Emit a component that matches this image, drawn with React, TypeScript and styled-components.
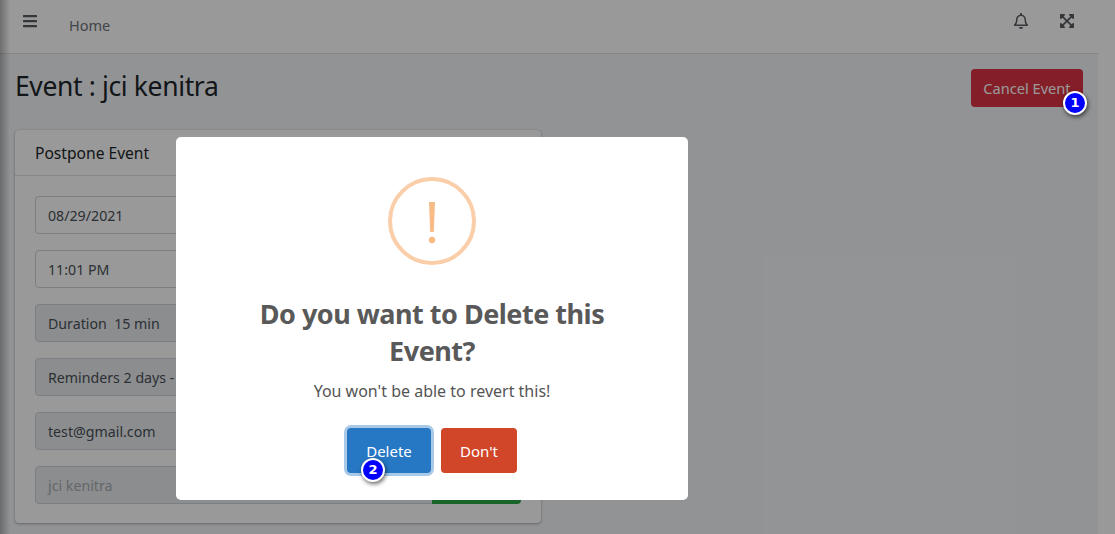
import React from 'react';
import styled, { createGlobalStyle } from 'styled-components';
import { FaBars, FaExpandArrowsAlt, FaRegBell } from 'react-icons/fa';

const Global = createGlobalStyle`
  html, body { margin: 0; padding: 0; height: 100%; overflow: hidden; }
  body { font-family: "Noto Sans", "Open Sans", sans-serif; background: #f4f6f9; color: #212529; }
  * { box-sizing: border-box; }
`;
const Page = styled.div`
  position: relative; width: 1115px; height: 534px; overflow: hidden; display: flex;
`;
const Content = styled.div`
  position: relative; width: 1098px; height: 534px; background: #f4f6f9;
  &::after {
    content: ''; position: absolute; left: 0; top: 0; bottom: 0; width: 10px;
    background: linear-gradient(to right, rgba(0,0,0,.28), rgba(0,0,0,0));
  }
`;
const Rail = styled.div`
  flex: 1; background: #fff;
`;
const Nav = styled.header`
  height: 54px; background: #fff; border-bottom: 1px solid #dee2e6; display: flex; align-items: flex-start; padding: 13px 23px 0 22px;
`;
const IconBtn = styled.span`
  display: block; color: #575c61; line-height: 0;
`;
const HomeLink = styled.span`
  font-size: 14.500px; line-height: 20px; color: #6e7378; margin: 2px auto 0 31px;
`;
const NavRight = styled.div`
  display: flex; gap: 30px;
`;
const Head = styled.div`
  display: flex; justify-content: space-between; align-items: flex-start; padding: 15px 15px 0 15px;
`;
const Title = styled.h1`
  margin: -1px 0 1px; font-size: 26.500px; letter-spacing: -.37px; font-weight: 400; line-height: 36px;
`;
const Cancel = styled.button`
  height: 38px; width: 112px; border: 0; border-radius: 4px; background: #dc3545; color: #fff; font: 14.600px "Noto Sans", sans-serif; padding: 0;
`;
const Card = styled.section`
  margin: 23px 0 0 15px; width: 526px; height: 393px; background: #fff; border-radius: 4px; box-shadow: 0 0 1px rgba(0,0,0,.2), 0 1px 3px rgba(0,0,0,.3);
`;
const CardHead = styled.div`
  height: 46px; padding: 0 20px; display: flex; align-items: center; font-size: 15.600px; border-bottom: 1px solid #dfdfdf;
`;
const CardBody = styled.div`
  padding: 20px; display: flex; flex-direction: column; gap: 16px; position: relative;
`;
const Field = styled.div<{ $off?: boolean; $muted?: boolean }>`
  height: 38px; border: 1px solid #ced4da; border-radius: 4px; padding: 0 12px; display: flex; align-items: center; font-size: 14.200px;
  background: ${p => (p.$off ? '#e9ecef' : '#fff')}; color: ${p => (p.$muted ? '#a4abb2' : '#495057')}; white-space: pre;
`;
const SaveBtn = styled.div`
  position: absolute; right: 20px; bottom: 20px; width: 89px; height: 38px; background: #28a745; border-radius: 0 0 4px 0;
`;
const Overlay = styled.div`
  position: absolute; inset: 0; background: rgba(0,0,0,.4);
`;
const Modal = styled.div`
  position: absolute; left: 176px; top: 137px; width: 512px; height: 363px; background: #fff; border-radius: 5px;
  display: flex; flex-direction: column; align-items: center; padding-top: 40px;
`;
const Ring = styled.div`
  width: 88px; height: 88px; border: 4px solid #facea8; border-radius: 50%; display: flex; justify-content: center; line-height: 0;
`;
const Heading = styled.h2`
  margin: 30px 0 0; width: 420px; text-align: center; font-size: 27px; letter-spacing: -.5px; line-height: 37px; font-weight: 700; color: #595959;
`;
const Sub = styled.p`
  margin: 9px 0 0; font-size: 16px; line-height: 26px; color: #545454;
`;
const Actions = styled.div`
  display: flex; gap: 10px; margin-top: 24px;
`;
const ModalBtn = styled.button<{ $bg: string; $focus?: boolean }>`
  height: 45px; padding: 0; width: ${p => (p.$focus ? '84px' : '76px')}; border: 0; border-radius: 4px; background: ${p => p.$bg}; color: #fff; font: 15px "Noto Sans", sans-serif;
  ${p => (p.$focus ? 'box-shadow: 0 0 0 3px rgba(39,120,197,.4);' : '')}
`;
const Badge = styled.span<{ $x: number; $y: number }>`
  position: absolute; left: ${p => p.$x}px; top: ${p => p.$y}px; width: 24px; height: 24px; border-radius: 50%; background: #0000ff; border: 2px solid #fff; color: #fff;
  font: 700 13px/20px "DejaVu Sans", sans-serif; text-align: center; box-shadow: 1px 2px 4px rgba(0,0,0,.6);
`;

export default function App() {
  return (
    <Page>
      <Global />
      <Content>
        <Nav>
          <IconBtn><FaBars size={16} /></IconBtn>
          <HomeLink>Home</HomeLink>
          <NavRight>
            <IconBtn><FaRegBell size={16} /></IconBtn>
            <IconBtn><FaExpandArrowsAlt size={16} /></IconBtn>
          </NavRight>
        </Nav>
        <Head>
          <Title>Event : jci kenitra</Title>
          <Cancel>Cancel Event</Cancel>
        </Head>
        <Card>
          <CardHead>Postpone Event</CardHead>
          <CardBody>
            <Field>08/29/2021</Field>
            <Field>11:01 PM</Field>
            <Field $off>Duration  15 min</Field>
            <Field $off>Reminders 2 days - 5 days</Field>
            <Field $off>test@gmail.com</Field>
            <Field $off $muted>jci kenitra</Field>
            <SaveBtn />
          </CardBody>
        </Card>
      </Content>
      <Rail />
      <Overlay />
      <Modal>
        <Ring>
          <svg width="12" height="44" viewBox="0 0 12 44" style={{ marginTop: 20 }}><path d="M3 1h6l-1.200 30h-3.600z" fill="#f8bb86"/><circle cx="6" cy="39" r="3.200" fill="#f8bb86"/></svg>
        </Ring>
        <Heading>Do you want to Delete this Event?</Heading>
        <Sub>You won't be able to revert this!</Sub>
        <Actions>
          <ModalBtn $bg="#2778c4" $focus>Delete</ModalBtn>
          <ModalBtn $bg="#d14529">Don't</ModalBtn>
        </Actions>
      </Modal>
      <Badge $x={1063} $y={91}>1</Badge>
      <Badge $x={361} $y={458}>2</Badge>
    </Page>
  );
}
